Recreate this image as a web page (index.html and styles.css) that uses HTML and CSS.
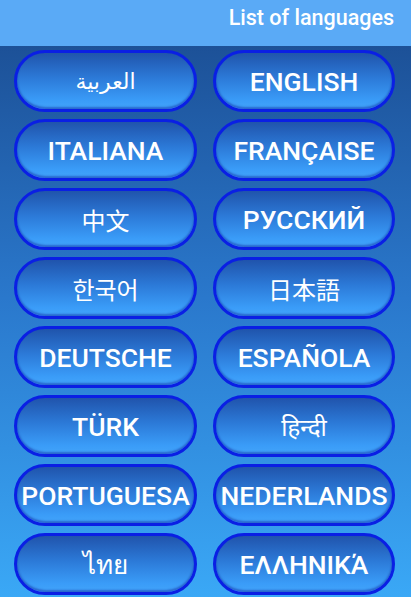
FILE: index.html
```html
<!DOCTYPE html>
<html lang="en">
<head>
<meta charset="UTF-8">
<title>List of languages</title>
<link rel="stylesheet" href="styles.css">
</head>
<body>

<header class="bar">List of languages</header>

<main class="langs">
  <button class="lang native" lang="ar">العربية</button>
  <button class="lang">ENGLISH</button>
  <button class="lang">ITALIANA</button>
  <button class="lang">FRANÇAISE</button>
  <button class="lang native" lang="zh">中文</button>
  <button class="lang">РУССКИЙ</button>
  <button class="lang native" lang="ko">한국어</button>
  <button class="lang native" lang="ja">日本語</button>
  <button class="lang">DEUTSCHE</button>
  <button class="lang">ESPAÑOLA</button>
  <button class="lang">TÜRK</button>
  <button class="lang native" lang="hi">हिन्दी</button>
  <button class="lang">PORTUGUESA</button>
  <button class="lang">NEDERLANDS</button>
  <button class="lang native" lang="th">ไทย</button>
  <button class="lang">ΕΛΛΗΝΙΚΆ</button>
</main>

</body>
</html>
```

FILE: styles.css
```css
*{box-sizing:border-box}
html,body{height:100%}
body{
  margin:0;
  font-family:Roboto,"Noto Sans","Noto Sans CJK SC","DejaVu Sans",sans-serif;
  background:linear-gradient(180deg,#1a4a8e 0%,#2a78cc 50%,#3aa8f6 100%);
  overflow:hidden}
.bar{
  height:46px;
  background:#5aaaf6;
  color:#fff;
  font-size:21.5px;font-weight:500;
  text-align:right;
  padding:5px 17px 0 0}
.langs{
  display:grid;
  grid-template-columns:183px 182px;
  grid-auto-rows:62px;
  column-gap:16px;row-gap:7px;
  padding:4px 0 0 14px}
.lang{
  border:3px solid #0a1fe4;
  border-radius:31px;
  background:linear-gradient(180deg,#2054ac 0%,#2c7ad8 45%,#3a9cf8 85%,#42a4fa 100%);
  box-shadow:inset 0 -2px 2px rgba(10,30,150,.45);
  color:#fff;
  font-family:inherit;
  font-size:26.5px;font-weight:500;
  white-space:nowrap;
  padding:0;
  display:flex;align-items:center;justify-content:center}
.native{font-weight:400;font-size:24px}
.lang[lang=ko]{font-family:"Noto Sans CJK KR",sans-serif}
.lang[lang=ja]{font-family:"Noto Sans CJK JP",sans-serif}
.lang[lang=zh]{font-family:"Noto Sans CJK SC",sans-serif}
.lang[lang=th]{font-size:26px}
.lang[lang=ar]{font-family:"DejaVu Sans","Noto Sans",sans-serif;font-size:22px}
```
